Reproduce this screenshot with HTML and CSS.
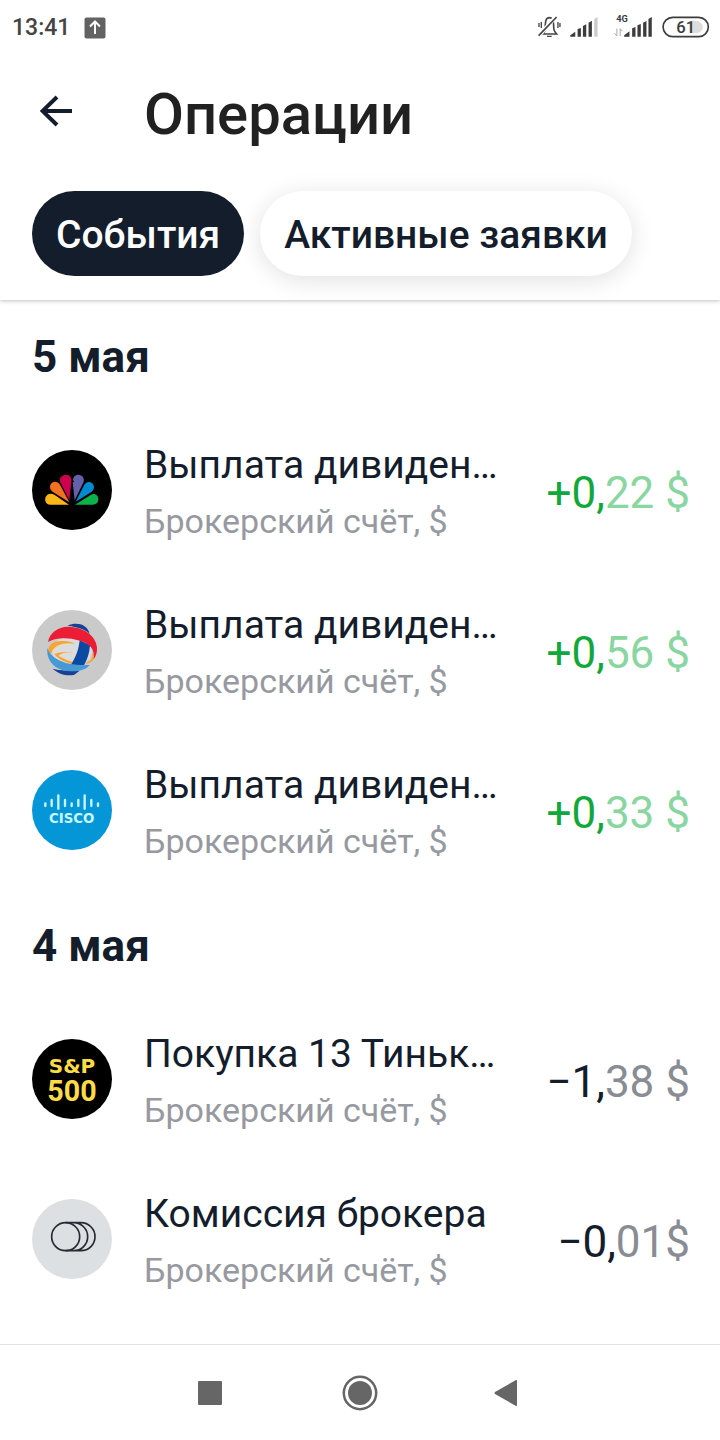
FILE: index.html
```html
<!DOCTYPE html>
<html lang="ru">
<head>
<meta charset="UTF-8">
<meta name="viewport" content="width=device-width,initial-scale=1">
<title>Операции</title>
<link rel="stylesheet" href="styles.css">
</head>
<body>
<header class="header">
  <div class="status">
    <span class="time">13:41</span>
    <svg class="upload" viewBox="0 0 22 22" width="22" height="22"><rect x=".5" y=".5" width="21" height="21" rx="2" fill="#626262"/><path d="M11 17V5M6 9.500l5-5 5 5" fill="none" stroke="#fff" stroke-width="2"/></svg>
    <!-- звонок, сеть, батарея -->
    <svg class="signals" viewBox="50 39 520 90" width="173" height="30">
      <g fill="none" stroke="#444" stroke-width="5">
        <path d="M67 102c9-8 8-14 8-27 0-15 4-22 12-22s13 7 13 22c0 13 0 17 9 27z"/>
        <path d="M80 109h14M63 66v18M56 69v12M113 66v18M119 69v12" stroke-width="4"/>
        <path d="M58 105l46-52" stroke="#fff" stroke-width="12"/>
        <path d="M55 107l54-56"/>
      </g>
      <g fill="#3c3c3c">
        <path d="M150 110V106L165 95V110zM172 110V87L182 84V110zM188 110V78L198 73V110zM205 110V68L215 62V110z"/>
        <path d="M222 110V57L232 51V110z" fill="#ccc"/>
        <path d="M312 110V106L328 94V110zM336 110V85L346 81V110zM352 110V76L362 72V110zM369 110V68L379 63V110zM385 110V57L395 51V110z"/>
        <text x="288" y="66" class="net">4G</text>
      </g>
      <path d="M290 86v22l-7-8M300 108V86l7 8" fill="none" stroke="#aaa" stroke-width="3"/>
      <path d="M508 62h18c30 3 30 36 0 38h-18z" fill="#ddd"/>
      <rect x="429" y="52" width="136" height="58" rx="29" fill="none" stroke="#3c3c3c" stroke-width="5"/>
      <text x="497" y="98" class="charge" text-anchor="middle">61</text>
    </svg>
  </div>
  <div class="title-bar">
    <button class="back" aria-label="Назад">
      <svg viewBox="0 0 32 32" width="32" height="32"><path d="M32 16H2M17 2L2.500 16 17 30" fill="none" stroke="#141d2b" stroke-width="4"/></svg>
    </button>
    <h1>Операции</h1>
  </div>
  <div class="chips">
    <button class="chip active">События</button>
    <button class="chip">Активные заявки</button>
  </div>
</header>

<main>
  <section>
    <h2>5 мая</h2>
    <ul>
      <li>
        <svg class="logo" viewBox="36 30 240 240">
          <circle cx="156" cy="150" r="120"/>
          <path d="M147 194H91c-14 0-18-14-14-23 4-10 16-13 26-7z" fill="#fcb716"/>
          <path d="M148 187L99 156c-12-9-11-21-3-28 8-6 19-2 24 6z" fill="#f37021"/>
          <path d="M148 181L121 127c-5-12 5-23 16-23 13 0 19 10 17 22z" fill="#cc004c"/>
          <path d="M164 181L158 127l5-1-4-5c0-10 6-17 16-17 12 0 19 11 16 22z" fill="#6460aa"/>
          <path d="M167 185l26-51c7-11 19-10 25-3 7 8 4 19-4 25z" fill="#0089d0"/>
          <path d="M165 194l48-30c12-5 22 2 22 14 0 10-7 16-17 16z" fill="#0db14b"/>
        </svg>
        <div class="info"><h3>Выплата дивиден…</h3><p>Брокерский счёт, $</p></div>
        <span class="sum plus">+0,<span>22 $</span></span>
      </li>
      <li>
        <svg class="logo" viewBox="36 30 240 240">
          <circle cx="156" cy="150" r="120" fill="#cbcaca"/>
          <ellipse cx="156" cy="154" rx="60" ry="46" fill="#dddcdc"/>
          <path d="M143 77c26-12 58-6 66 24-16-14-36-20-66-24zM98 206c18 16 44 24 65 18l16-12c-30 2-59-1-81-6z" fill="#164194"/>
          <path d="M84 160c-2-24 14-38 45-37 14 0 26 3 36 8-31-5-62 2-72 29z" fill="#f7a531"/>
          <path d="M155 157c-16-1-30 2-40 10 16 10 36 18 58 21l-4 6c-28-4-52-14-66-31 14-7 32-9 52-5z" fill="#f7a531"/>
          <path d="M201 187c13-5 17-13 16-27l6 3c2 14-4 24-24 29z" fill="#f7a531"/>
          <path d="M179 121l31 14c-1 23-8 43-18 61l-39-2c15-23 23-46 26-73z" fill="#0b4aa2"/>
          <path d="M84 126c5-29 35-49 68-45 43 2 77 30 79 62 1 14-3 25-10 35 5-28-11-48-41-56-39-12-77-9-96 4z" fill="#ed1c35"/>
          <path d="M82 144c10 32 54 55 127 51-13 17-40 21-67 18-35-4-64-29-60-69z" fill="#4699d5"/>
        </svg>
        <div class="info"><h3>Выплата дивиден…</h3><p>Брокерский счёт, $</p></div>
        <span class="sum plus">+0,<span>56 $</span></span>
      </li>
      <li>
        <svg class="logo" viewBox="36 30 240 240">
          <circle cx="156" cy="150" r="120" fill="#0496d7"/>
          <path d="M76 130v8M95 120v18M115 106v40M135 120v18M155 130v8M175 120v18M194 106v40M214 120v18M234 130v8" stroke="#c9f8ff" stroke-width="7" stroke-linecap="round"/>
          <text x="155" y="189" class="cisco" text-anchor="middle">CISCO</text>
        </svg>
        <div class="info"><h3>Выплата дивиден…</h3><p>Брокерский счёт, $</p></div>
        <span class="sum plus">+0,<span>33 $</span></span>
      </li>
    </ul>
  </section>
  <section>
    <h2>4 мая</h2>
    <ul>
      <li>
        <svg class="logo" viewBox="36 27 240 240">
          <circle cx="156" cy="147" r="120"/>
          <g fill="#fcdc46" text-anchor="middle">
            <text x="156" y="128" class="sp">S&amp;P</text>
            <text x="156" y="212" class="sp-num">500</text>
          </g>
        </svg>
        <div class="info"><h3>Покупка 13 Тиньк…</h3><p>Брокерский счёт, $</p></div>
        <span class="sum">−1,<span>38 $</span></span>
      </li>
      <li>
        <svg class="logo" viewBox="36 27 240 240">
          <circle cx="156" cy="147" r="120" fill="#dde0e2"/>
          <g fill="none" stroke="#262a35" stroke-width="5">
            <circle cx="137" cy="140" r="42"/>
            <path d="M137 98h24a42 42 0 0 1 0 84h-24M161 98h22a42 42 0 0 1 0 84h-22"/>
          </g>
        </svg>
        <div class="info"><h3>Комиссия брокера</h3><p>Брокерский счёт, $</p></div>
        <span class="sum">−0,<span>01$</span></span>
      </li>
    </ul>
  </section>
</main>

<nav class="nav">
  <button aria-label="Недавние"><svg viewBox="0 0 36 36" width="36" height="36"><rect x="4" y="6" width="24" height="24" rx="1"/></svg></button>
  <button aria-label="Домой"><svg viewBox="0 0 36 36" width="36" height="36"><circle cx="18" cy="18" r="12"/><circle cx="18" cy="18" r="16.200" fill="none" stroke="#666" stroke-width="2.500"/></svg></button>
  <button aria-label="Назад"><svg viewBox="0 0 36 36" width="36" height="36"><path d="M5 17L26 5q1-.5 1 1v24q0 1.500-1 1L5 19q-1-1 0-2z"/></svg></button>
</nav>
</body>
</html>
```

FILE: styles.css
```css
:root{--dark:#141d2b;--grey:#96999f;--green:#12a73b;--green-light:#8ad6a0}
*{box-sizing:border-box}
body{font-family:Roboto,"Noto Sans",sans-serif;margin:0;min-height:100vh;display:flex;flex-direction:column;background:#fff;color:var(--dark)}
h1,h2,h3,p,ul{margin:0;padding:0}
button{border:none;background:none;padding:0;font-family:inherit;color:inherit;cursor:pointer}
svg{display:block;flex:none}

.header{padding-bottom:24px;overflow:hidden;box-shadow:0 1px 4px rgba(0,0,0,.25)}
.status{display:flex;align-items:center;height:55px;padding:0 10px 0 12px}
.time{font-size:23px;font-weight:500;color:#444}
.upload{margin-left:14px}
.signals{margin-left:auto}
.net{font:700 28px Roboto,sans-serif}
.charge{font:500 50px Roboto,sans-serif;fill:#3c3c3c}

.title-bar{display:flex;align-items:center;height:112px;padding:0 40px}
.back{width:104px}
h1{padding-top:6px;font-size:58px;font-weight:500;line-height:64px;color:#212121}
.chips{display:flex;gap:16px;padding:24px 32px 0}
.chip{height:85px;padding:2px 24px 0;border-radius:43px;background:#fff;font-size:39px;font-weight:500;white-space:nowrap;box-shadow:0 4px 24px rgba(0,0,0,.12)}
.chip.active{background:var(--dark);color:#fff;box-shadow:none}

main{flex:1;padding-top:1px}
h2{height:109px;padding-left:32px;font-size:44px;font-weight:700;line-height:112px}
ul{list-style:none}
li{display:flex;align-items:center;height:160px;padding:0 30px 0 32px}
.logo{width:80px;height:80px;margin-right:32px}
.info{flex:1;min-width:0;padding-top:6px;white-space:nowrap}
h3{font-size:39px;font-weight:400;line-height:56px}
.info p{font-size:34px;line-height:56px;color:var(--grey)}
.sum{padding-top:6px;font-size:44px;white-space:nowrap}
.sum span{color:#898c92}
.sum.plus{color:var(--green)}
.plus span{color:var(--green-light)}
.cisco{font:700 40px "DejaVu Sans",sans-serif}
.cisco{fill:#c9f8ff}
.sp{font:700 60px "DejaVu Sans",sans-serif}
.sp-num{font:700 86px Roboto,sans-serif}

.nav{display:flex;justify-content:center;gap:112px;height:96px;padding-top:30px;border-top:1px solid #e2e2e2}
.nav button{width:36px;height:36px}
.nav svg{fill:#666}
```
